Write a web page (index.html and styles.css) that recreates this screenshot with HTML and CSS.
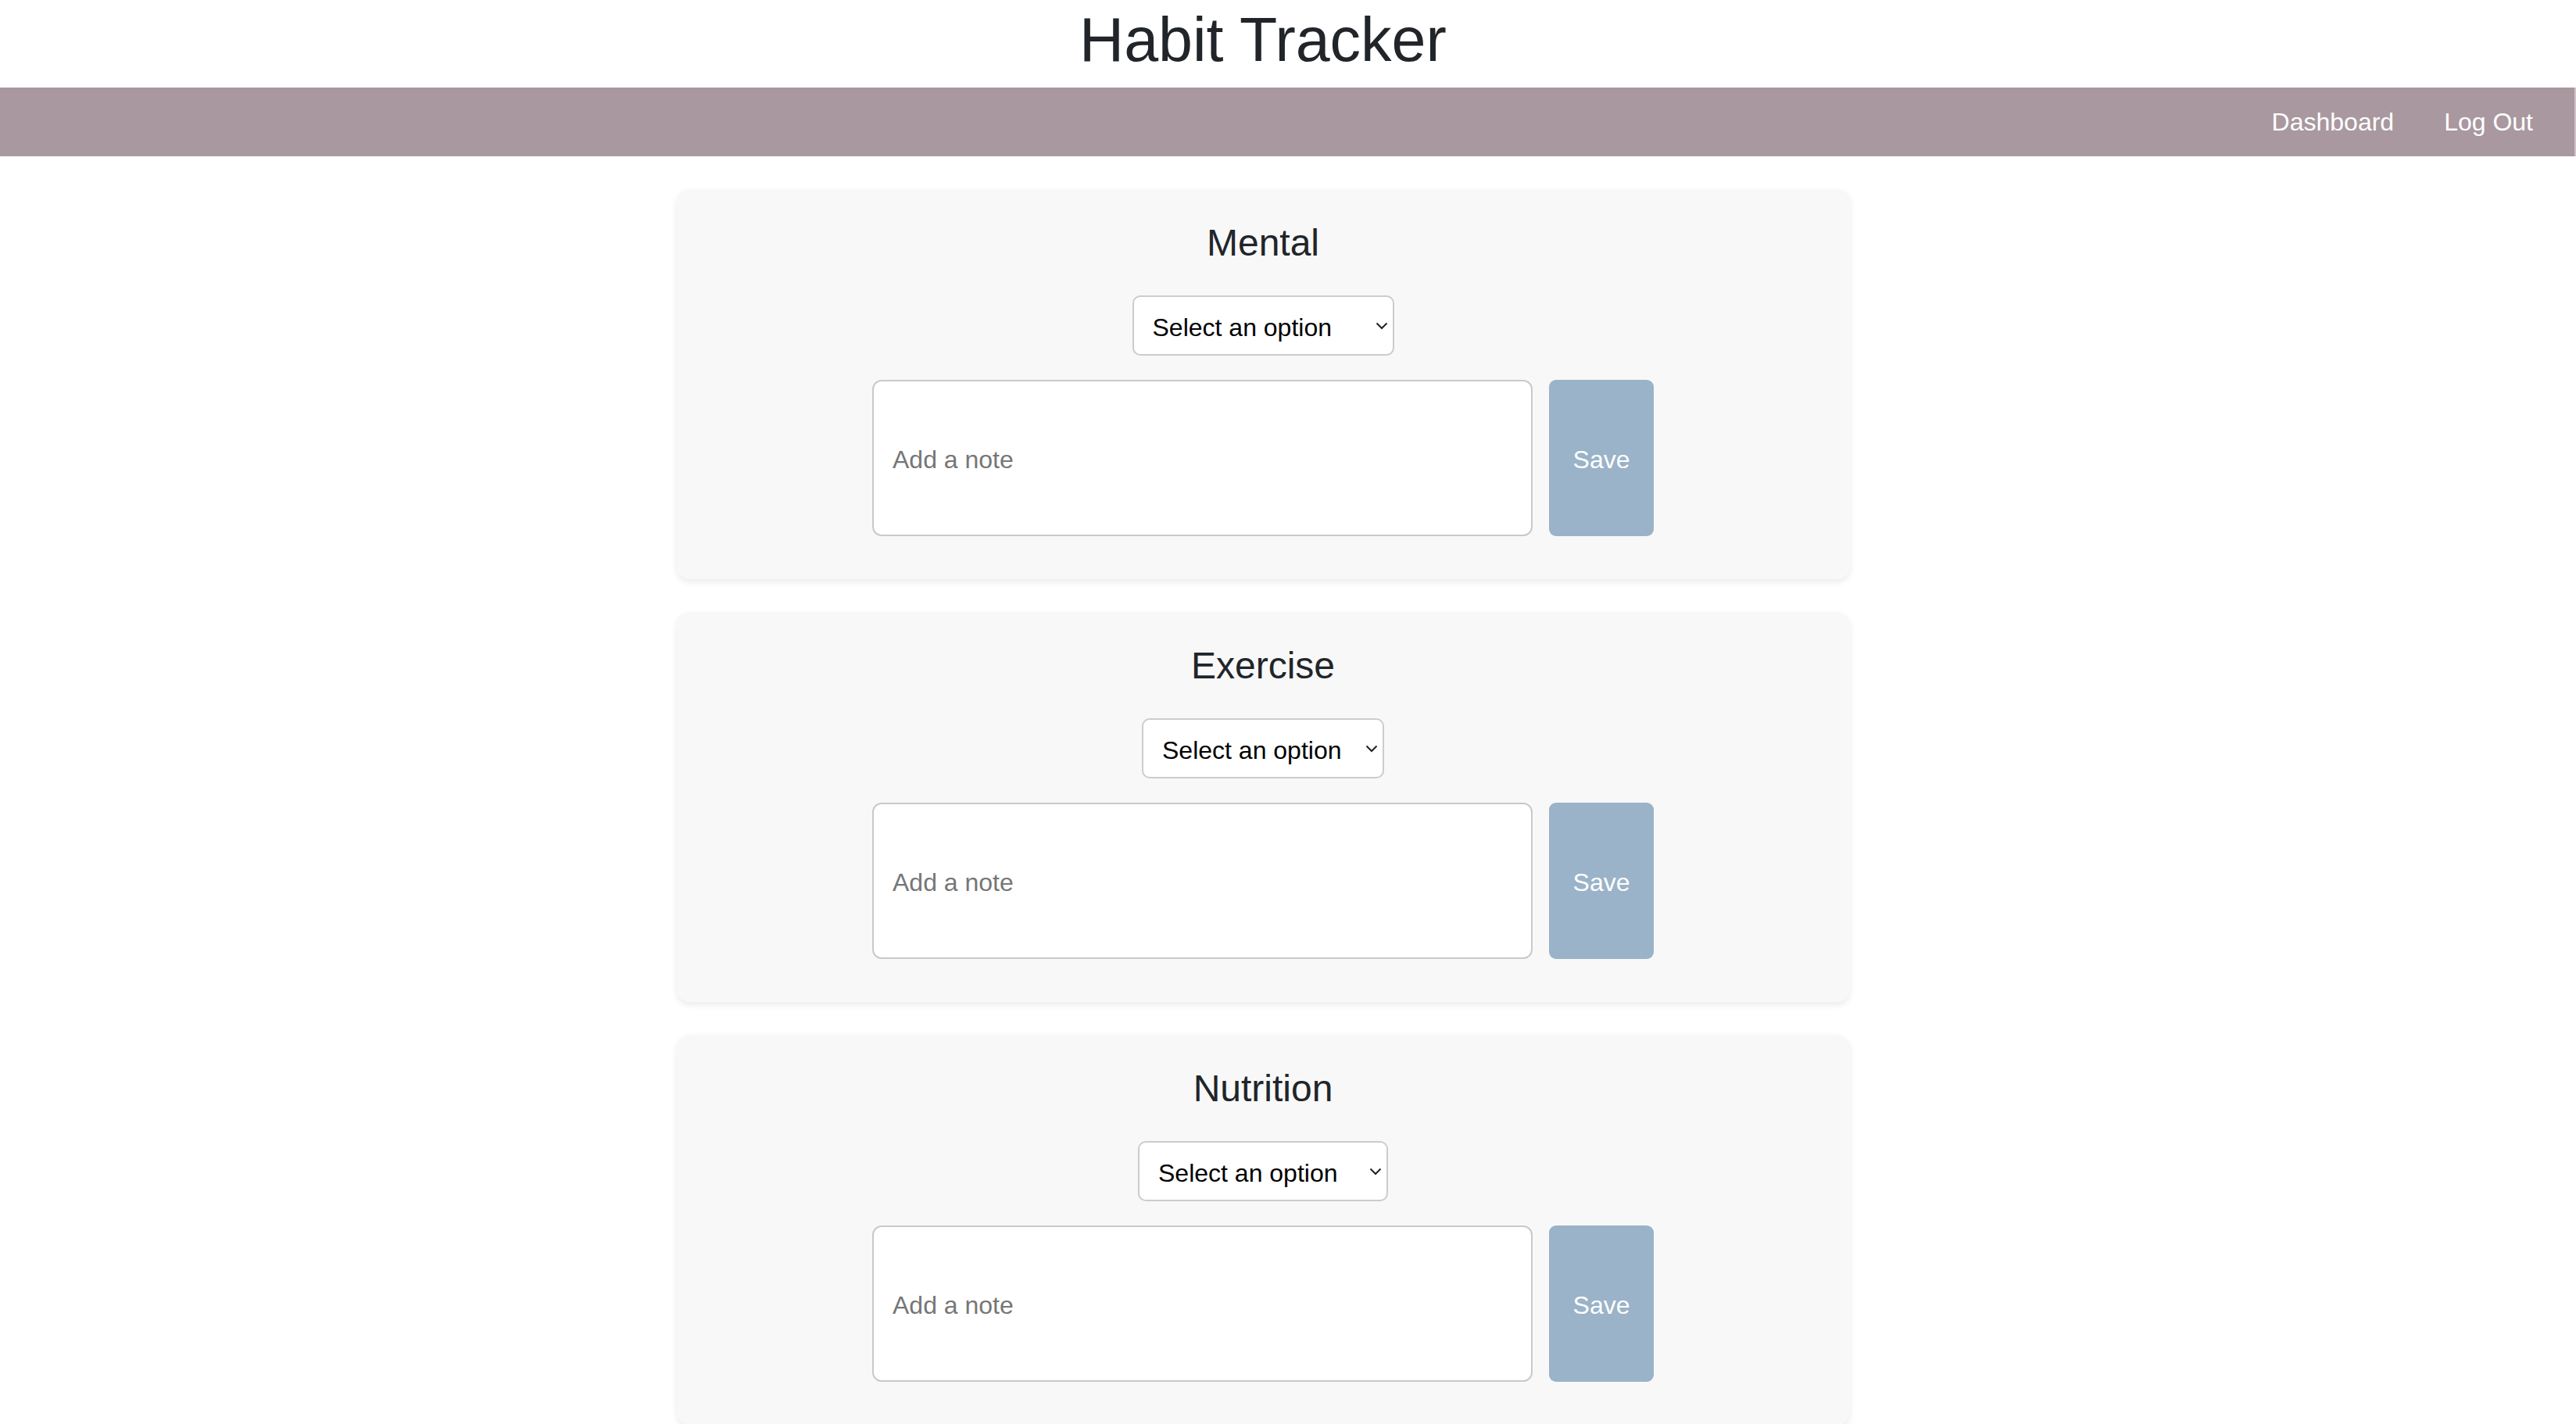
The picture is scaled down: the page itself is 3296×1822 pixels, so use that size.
FILE: index.html
```html
<!DOCTYPE html>
<html lang="en">
<head>
<meta charset="utf-8">
<title>Habit Tracker</title>
<link rel="stylesheet" href="styles.css">
</head>
<body>
<header class="site-header">
  <h1 class="site-title">Habit Tracker</h1>
</header>
<nav class="topnav">
  <a class="topnav-link" href="#">Dashboard</a>
  <a class="topnav-link" href="#">Log Out</a>
</nav>
<main class="habits">
  <section class="habit-card">
    <h2 class="habit-title">Mental</h2>
    <div class="select-wrap select-mental">
      <select class="habit-select">
        <option>Select an option</option>
      </select>
      <svg class="chevron" viewBox="0 0 16 10" width="16" height="10" aria-hidden="true"><path d="M1.5 1.5 L8 8 L14.5 1.5" fill="none" stroke="#222" stroke-width="2"/></svg>
    </div>
    <div class="note-row">
      <input class="note-input" type="text" placeholder="Add a note">
      <button class="save-btn" type="button">Save</button>
    </div>
  </section>
  <section class="habit-card">
    <h2 class="habit-title">Exercise</h2>
    <div class="select-wrap select-exercise">
      <select class="habit-select">
        <option>Select an option</option>
      </select>
      <svg class="chevron" viewBox="0 0 16 10" width="16" height="10" aria-hidden="true"><path d="M1.5 1.5 L8 8 L14.5 1.5" fill="none" stroke="#222" stroke-width="2"/></svg>
    </div>
    <div class="note-row">
      <input class="note-input" type="text" placeholder="Add a note">
      <button class="save-btn" type="button">Save</button>
    </div>
  </section>
  <section class="habit-card">
    <h2 class="habit-title">Nutrition</h2>
    <div class="select-wrap select-nutrition">
      <select class="habit-select">
        <option>Select an option</option>
      </select>
      <svg class="chevron" viewBox="0 0 16 10" width="16" height="10" aria-hidden="true"><path d="M1.5 1.5 L8 8 L14.5 1.5" fill="none" stroke="#222" stroke-width="2"/></svg>
    </div>
    <div class="note-row">
      <input class="note-input" type="text" placeholder="Add a note">
      <button class="save-btn" type="button">Save</button>
    </div>
  </section>
</main>
</body>
</html>
```

FILE: styles.css
```css
html, body {
  margin: 0;
  padding: 0;
  background: #ffffff;
  overflow: hidden;
}

body {
  font-family: "Liberation Sans", Arial, Helvetica, sans-serif;
  color: #212529;
}

.site-header {
  padding-right: 64px;
  height: 112px;
  box-sizing: border-box;
  padding-top: 3px;
}

.site-title {
  margin: 0;
  font-size: 79px;
  font-weight: 400;
  line-height: 96px;
  text-align: center;
  color: #212529;
}

.topnav {
  height: 88px;
  background: #a9989f;
  display: flex;
  justify-content: flex-end;
  align-items: center;
  padding-right: 21px;
  border-right: 2px solid #cfc4c8;
}

.topnav-link {
  padding: 0 32px;
  font-size: 32px;
  line-height: 48px;
  color: #ffffff;
  text-decoration: none;
}

.habits {
  padding: 42px 64px 0 0;
  display: flex;
  flex-direction: column;
  align-items: center;
  gap: 42px;
}

.habit-card {
  width: 1501px;
  box-sizing: border-box;
  padding: 40px 0 55px;
  background: #f8f8f8;
  border-radius: 16px;
  box-shadow: 0 4px 8px rgba(0, 0, 0, 0.08);
  display: flex;
  flex-direction: column;
  align-items: center;
}

.habit-title {
  margin: 0 0 38px;
  font-size: 48px;
  font-weight: 400;
  line-height: 58px;
  color: #212529;
}

.select-wrap {
  position: relative;
  height: 77px;
  margin-bottom: 31px;
}

.select-mental { width: 335px; }
.select-exercise { width: 310px; }
.select-nutrition { width: 320px; }

.habit-select {
  -webkit-appearance: none;
  appearance: none;
  width: 100%;
  height: 100%;
  box-sizing: border-box;
  border: 2px solid #cccccc;
  border-radius: 10px;
  background: #ffffff;
  padding: 4px 40px 0 24px;
  font-family: "Liberation Sans", Arial, Helvetica, sans-serif;
  font-size: 32px;
  color: #000000;
  outline: none;
}

.chevron {
  position: absolute;
  right: 8px;
  top: 34px;
  width: 16px;
  height: 10px;
  pointer-events: none;
}

.note-row {
  display: flex;
  gap: 21px;
}

.note-input {
  width: 845px;
  height: 200px;
  box-sizing: border-box;
  border: 2px solid #c9c9c9;
  border-radius: 12px;
  background: #ffffff;
  padding: 4px 24px 0;
  font-family: "Liberation Sans", Arial, Helvetica, sans-serif;
  font-size: 32px;
  color: #212529;
  outline: none;
}

.note-input::placeholder {
  color: #767676;
}

.save-btn {
  width: 134px;
  height: 200px;
  border: none;
  border-radius: 9px;
  background: #9ab3c8;
  color: #ffffff;
  font-family: "Liberation Sans", Arial, Helvetica, sans-serif;
  font-size: 32px;
  padding: 4px 0 0;
}
```
